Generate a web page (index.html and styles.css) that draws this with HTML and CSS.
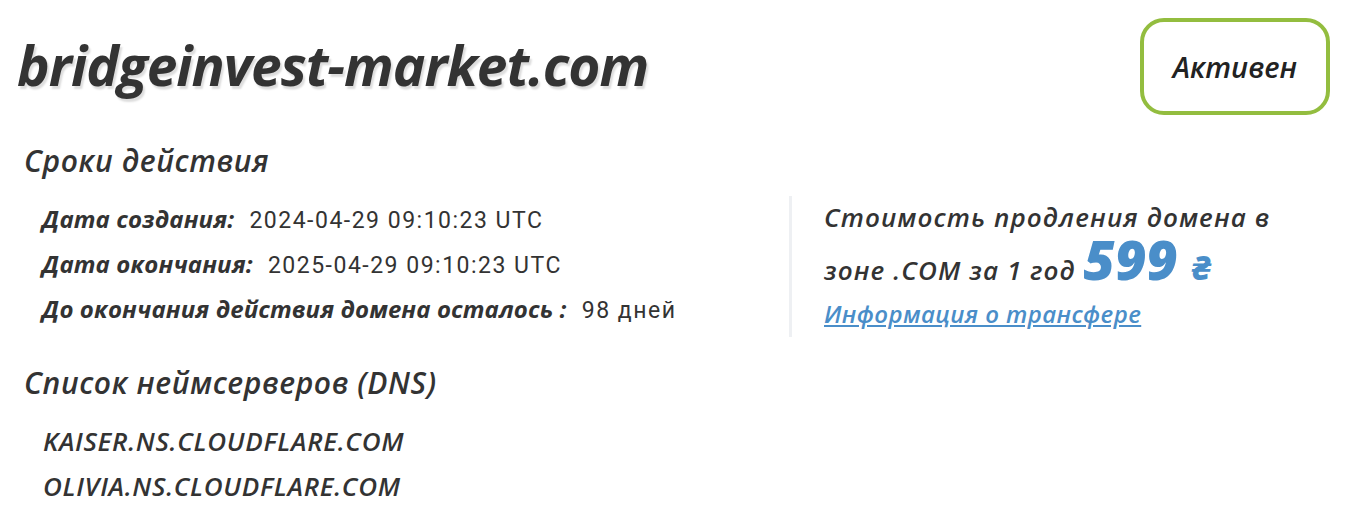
FILE: index.html
```html
<!DOCTYPE html>
<html lang="ru">
<head>
    <meta charset="UTF-8">
    <title>bridgeinvest-market.com</title>
    <link rel="stylesheet" href="styles.css">
</head>
<body>
    <div class="domain-page">
        <header class="domain-head">
            <h1 class="domain-name">bridgeinvest-market.com</h1>
            <div class="status-badge">Активен</div>
        </header>

        <h2 class="section-title">Сроки действия</h2>
        <div class="terms">
            <ul class="terms-list">
                <li><span class="label">Дата создания:</span> <span class="value">2024-04-29 09:10:23 UTC</span></li>
                <li><span class="label">Дата окончания:</span> <span class="value">2025-04-29 09:10:23 UTC</span></li>
                <li><span class="label">До окончания действия домена осталось :</span> <span class="value">98 дней</span></li>
            </ul>
            <div class="renew">
                <p class="renew-text">Стоимость продления домена в зоне .COM за 1 год <span class="price">599 <span class="currency">₴</span></span></p>
                <a class="transfer-link" href="#">Информация о трансфере</a>
            </div>
        </div>

        <h2 class="section-title">Список неймсерверов (DNS)</h2>
        <ul class="ns-list">
            <li>KAISER.NS.CLOUDFLARE.COM</li>
            <li>OLIVIA.NS.CLOUDFLARE.COM</li>
        </ul>
    </div>
</body>
</html>
```

FILE: styles.css
```css
* {
    margin: 0;
    padding: 0;
    box-sizing: border-box;
}

body {
    background: #fff;
    color: #333;
    font-family: "Open Sans", "Noto Sans", sans-serif;
    font-style: italic;
}

.domain-page {
    padding: 18px 32px 0 17px;
}

.domain-head {
    display: flex;
    justify-content: space-between;
    align-items: flex-start;
}

.domain-name {
    font-size: 55px;
    font-weight: 700;
    line-height: 1;
    margin-top: 19px;
    letter-spacing: -1px;
    text-shadow: 2px 3px 2px #ddd;
}

.status-badge {
    width: 190px;
    height: 97px;
    border: 4px solid #93bd3f;
    border-radius: 24px;
    display: flex;
    align-items: center;
    justify-content: center;
    font-size: 29px;
    font-weight: 600;
    color: #222;
}

.section-title {
    font-size: 30px;
    font-weight: 600;
    line-height: 36px;
    letter-spacing: 0.6px;
    margin: 28px 0 0 7px;
}

.terms {
    display: flex;
    margin-top: 17px;
}

.terms-list {
    list-style: none;
    width: 772px;
    padding-left: 25px;
}

.terms-list li {
    height: 45px;
    font-size: 24px;
    line-height: 45px;
    white-space: nowrap;
}

.label {
    font-weight: 700;
    letter-spacing: 0.1px;
}

.value {
    font-family: "Roboto", sans-serif;
    font-style: normal;
    font-weight: 400;
    font-size: 23px;
    letter-spacing: 1.5px;
    margin-left: 9px;
}

.renew {
    border-left: 3px solid #eef0f3;
    padding-left: 32px;
    height: 141px;
}

.renew-text {
    font-size: 26px;
    font-weight: 600;
    line-height: 42px;
    letter-spacing: 1.1px;
    width: 470px;
}

.price {
    color: #4a8ec9;
    font-size: 54px;
    font-weight: 800;
    letter-spacing: 0;
}

.currency {
    font-size: 34px;
}

.transfer-link {
    display: inline-block;
    margin-top: 7px;
    color: #4a8ec9;
    font-size: 24px;
    font-weight: 600;
    line-height: 32px;
    letter-spacing: 0.4px;
    text-decoration: underline;
}

.ns-list {
    list-style: none;
    padding-left: 26px;
    margin-top: 18px;
}

.ns-list li {
    font-size: 26px;
    font-weight: 600;
    line-height: 45px;
    letter-spacing: 0.7px;
}
```
